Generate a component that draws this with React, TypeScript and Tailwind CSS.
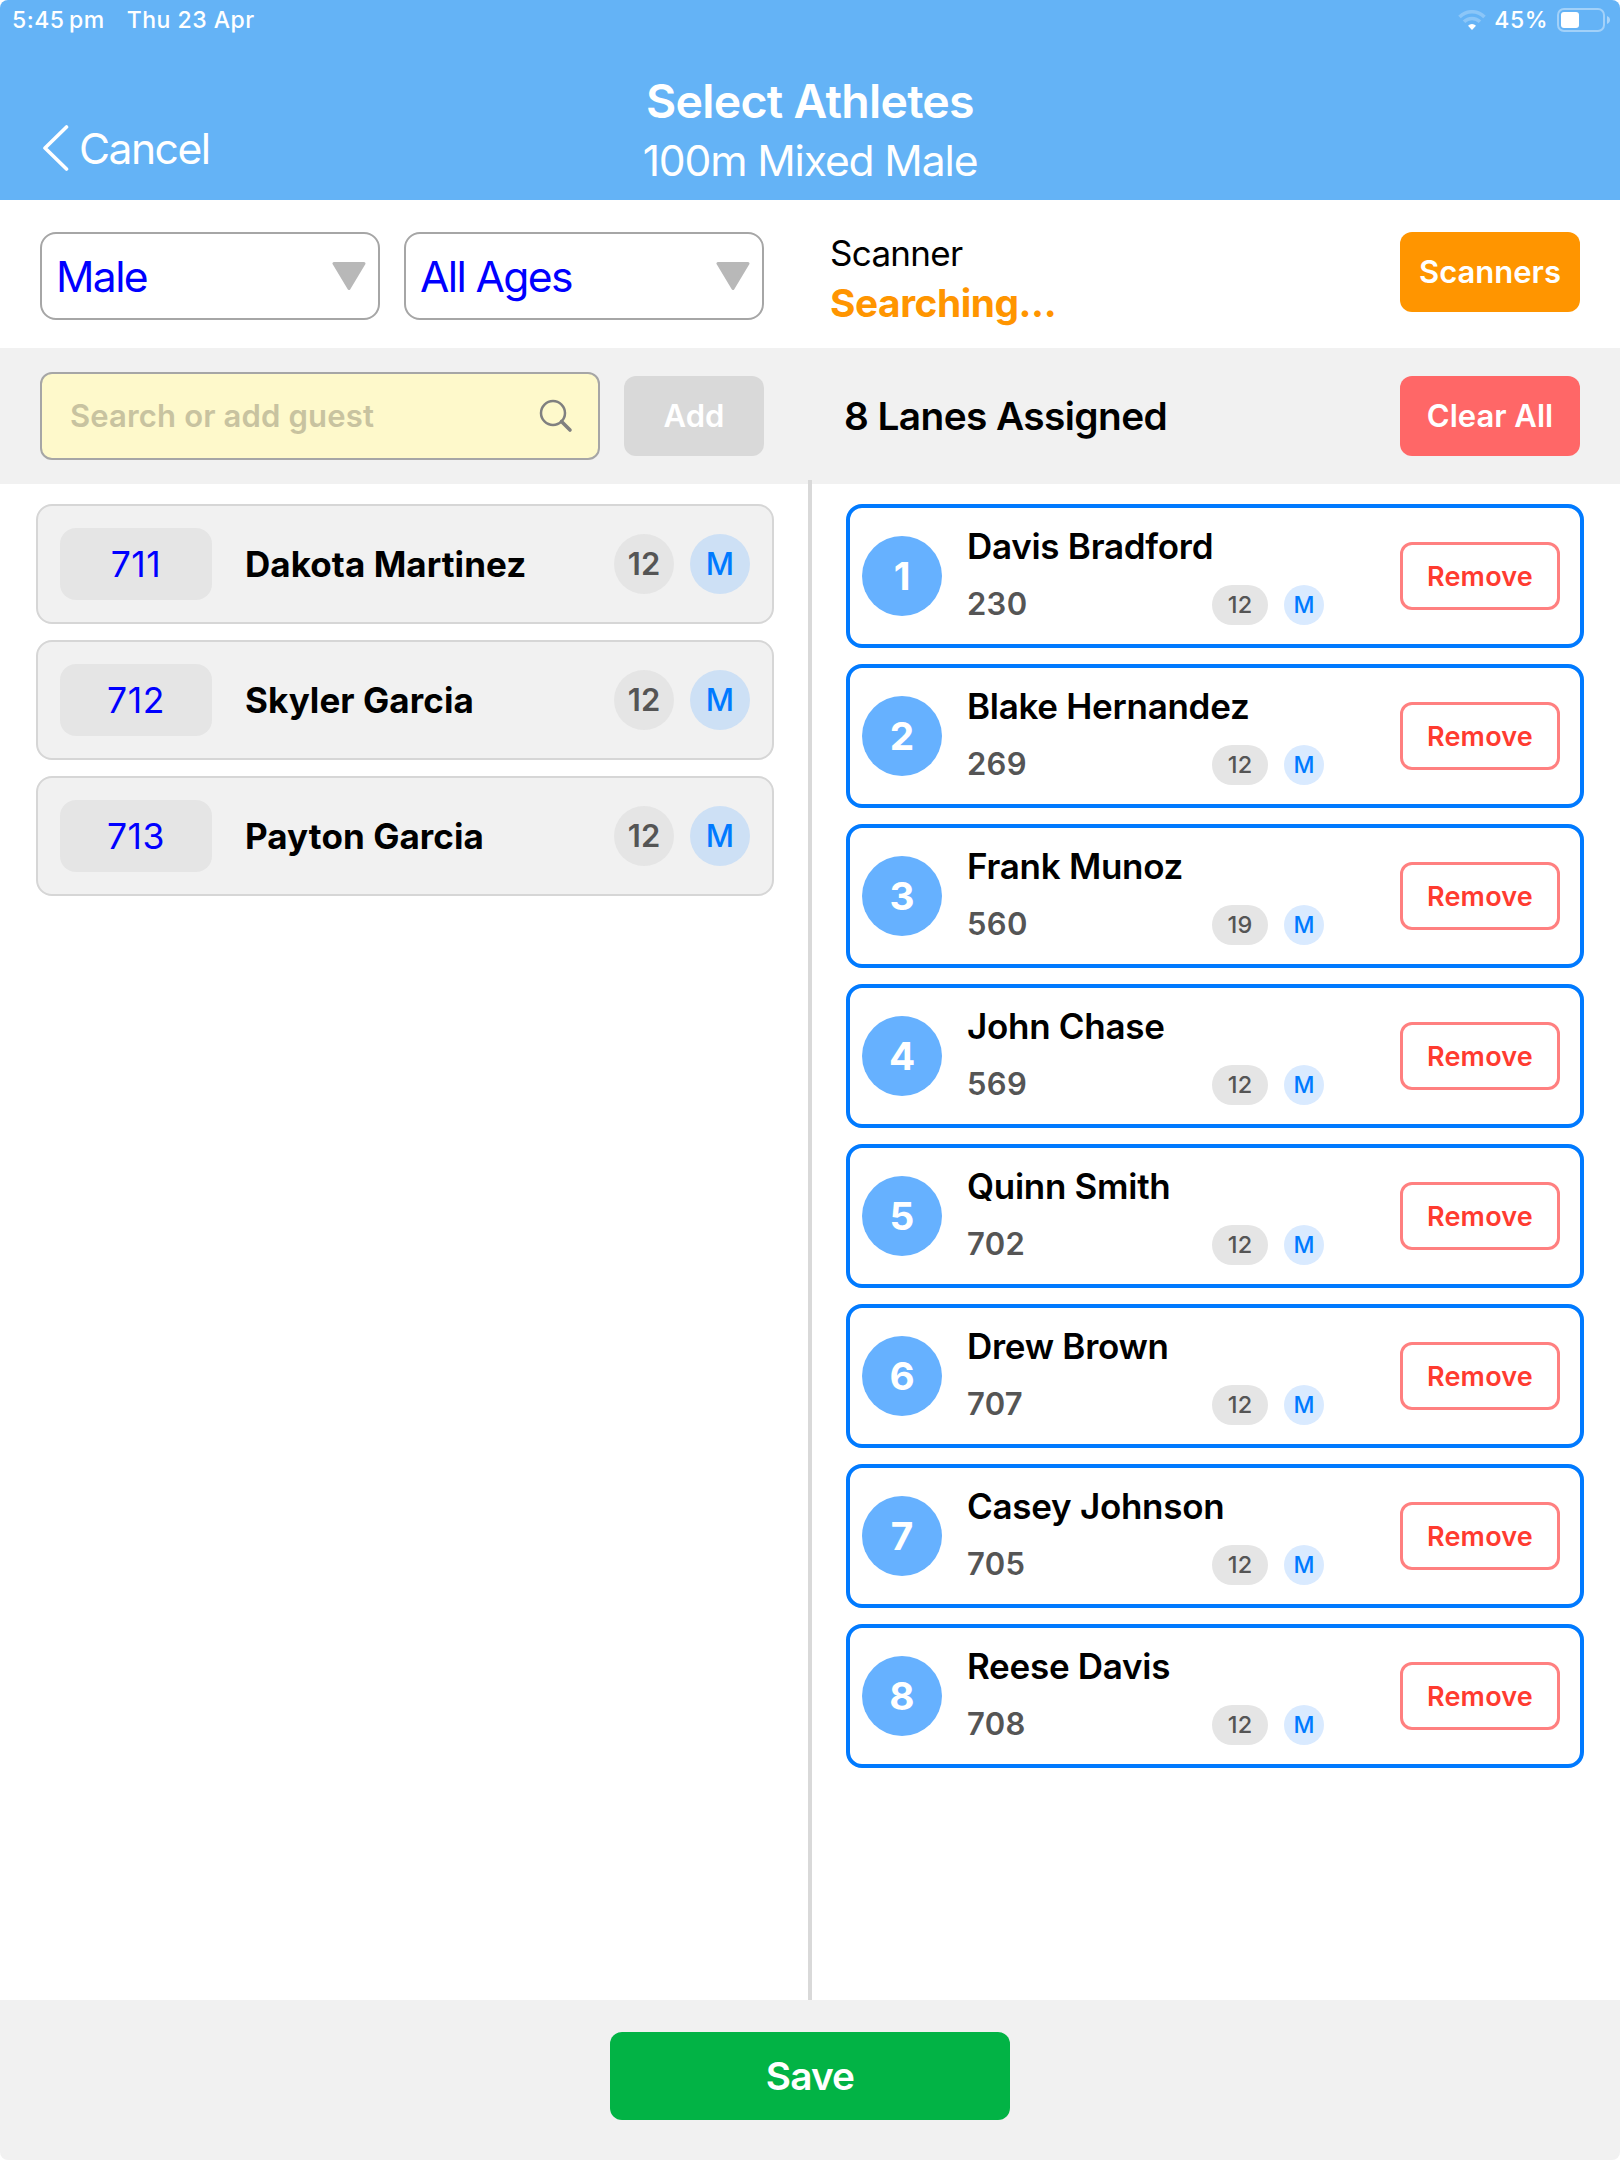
import { useState } from "react";

const athletes = [
  { bib: 711, name: "Dakota Martinez", age: 12, sex: "M" },
  { bib: 712, name: "Skyler Garcia", age: 12, sex: "M" },
  { bib: 713, name: "Payton Garcia", age: 12, sex: "M" },
];

const initialLanes = [
  { lane: 1, bib: 230, name: "Davis Bradford", age: 12, sex: "M" },
  { lane: 2, bib: 269, name: "Blake Hernandez", age: 12, sex: "M" },
  { lane: 3, bib: 560, name: "Frank Munoz", age: 19, sex: "M" },
  { lane: 4, bib: 569, name: "John Chase", age: 12, sex: "M" },
  { lane: 5, bib: 702, name: "Quinn Smith", age: 12, sex: "M" },
  { lane: 6, bib: 707, name: "Drew Brown", age: 12, sex: "M" },
  { lane: 7, bib: 705, name: "Casey Johnson", age: 12, sex: "M" },
  { lane: 8, bib: 708, name: "Reese Davis", age: 12, sex: "M" },
];

type Athlete = (typeof athletes)[number];
type Lane = (typeof initialLanes)[number];

function StatusBar() {
  return (
    <div className="flex h-10 items-center justify-between pl-3 pr-2.5 text-[23px] font-medium tracking-[0.022em]">
      <div className="flex gap-[22px]">
        <span>5:45&#8201;pm</span>
        <span>Thu 23 Apr</span>
      </div>
      <div className="flex items-center">
        <svg className="mr-2 h-5 w-7" viewBox="0 0 28 20" fill="none">
          <path d="M1.500 7a17.500 17.500 0 0 1 25 0" stroke="#fff" strokeOpacity="0.25" strokeWidth="3.600" />
          <path d="M6 11.800a11.200 11.200 0 0 1 16 0" stroke="#fff" strokeOpacity="0.25" strokeWidth="3.600" />
          <path d="M14 20l-4-4.200a5.600 5.600 0 0 1 8 0z" fill="#fff" />
        </svg>
        <span>45%</span>
        <svg className="ml-[9px] h-6 w-[53px]" viewBox="0 0 53 24" fill="none">
          <rect x="1" y="1" width="46" height="22" rx="6" stroke="#fff" strokeOpacity="0.4" strokeWidth="2" />
          <rect x="4" y="4" width="18" height="16" rx="3" fill="#fff" />
          <path d="M50 8c2 .8 3 2.200 3 4s-1 3.200-3 4z" fill="#fff" fillOpacity="0.45" />
        </svg>
      </div>
    </div>
  );
}

function Header() {
  return (
    <header className="h-[200px] rounded-t-lg bg-[#64b3f6] text-white">
      <StatusBar />
      <div className="grid h-40 grid-cols-3">
        <button type="button" className="mt-17 ml-[42px] flex h-20 items-center gap-[10px] text-[42.600px] tracking-[-0.036em]">
          <svg className="h-12 w-[27px]" viewBox="0 0 27 48" fill="none" stroke="#fff" strokeWidth="3.600" strokeLinecap="round" strokeLinejoin="round">
            <path d="M24.500 3L3 24l21.500 21" />
          </svg>
          <span className="pt-0.5">Cancel</span>
        </button>
        <div className="flex flex-col items-center pt-8">
          <h1 className="text-[46.500px] leading-[58px] font-semibold tracking-[-0.016em]">Select Athletes</h1>
          <p className="text-[42.600px] leading-[62px] tracking-[-0.027em]">100m Mixed Male</p>
        </div>
      </div>
    </header>
  );
}

function Select({ label, className }: { label: string; className: string }) {
  return (
    <button
      type="button"
      className={`flex h-[88px] items-center justify-between rounded-2xl border-2 border-[#a6a6a6] bg-white pr-3 pl-[14px] text-[42.600px] tracking-[-0.038em] text-[#0000ff] ${className}`}
    >
      <span className="pt-0.5">{label}</span>
      <svg className="h-7 w-[34px]" viewBox="0 0 34 28">
        <path d="M2 1.500h30L17 26.500z" fill="#b8b8b8" stroke="#b8b8b8" strokeWidth="3" strokeLinejoin="round" />
      </svg>
    </button>
  );
}

function AthleteRow({ athlete }: { athlete: Athlete }) {
  return (
    <li className="flex h-[120px] items-center rounded-2xl border-2 border-[#d6d6d6] bg-[#f1f1f1] px-[22px]">
      <span className="flex h-[72px] w-[152px] items-center justify-center rounded-2xl bg-[#e5e5e5] pt-0.5 text-[35.500px] tracking-[0.015em] text-[#0000ff]">
        {athlete.bib}
      </span>
      <span className="ml-[33px] flex-1 text-[35px] font-bold tracking-[0.002em]">{athlete.name}</span>
      <span className="flex size-[60px] items-center justify-center rounded-full bg-[#e5e5e5] text-[31px] font-semibold text-[#555]">
        {athlete.age}
      </span>
      <span className="ml-4 flex size-[60px] items-center justify-center rounded-full bg-[#cde0f5] text-[31px] font-medium text-[#007aff]">
        {athlete.sex}
      </span>
    </li>
  );
}

function LaneCard({ lane, onRemove }: { lane: Lane; onRemove: () => void }) {
  return (
    <li className="flex h-36 items-center rounded-2xl border-4 border-[#007aff] bg-white pr-5 pl-3">
      <span className="flex size-20 items-center justify-center rounded-full bg-[#66b1ff] text-[38.800px] font-bold text-white">
        {lane.lane}
      </span>
      <div className="ml-[25px] flex-1">
        <p className="text-[35px] leading-[56px] font-semibold tracking-[-0.008em]">{lane.name}</p>
        <div className="flex h-[60px] items-center pt-0.5">
          <span className="w-[245px] pb-0.5 text-[31px] font-semibold tracking-[0.01em] text-[#555]">{lane.bib}</span>
          <span className="flex h-10 w-14 items-center justify-center rounded-full bg-[#e5e5e5] text-[23.500px] font-medium tracking-[0.01em] text-[#555]">
            {lane.age}
          </span>
          <span className="ml-4 flex size-10 items-center justify-center rounded-full bg-[#d9eaff] text-[23px] font-medium text-[#007aff]">
            {lane.sex}
          </span>
        </div>
      </div>
      <button
        type="button"
        onClick={onRemove}
        className="h-[68px] w-40 rounded-xl border-3 border-[#ff8080] pt-0.5 text-[27px] font-semibold tracking-[0.008em] text-[#ff3b30]"
      >
        Remove
      </button>
    </li>
  );
}

export default function App() {
  const [lanes, setLanes] = useState(initialLanes);
  const [query, setQuery] = useState("");

  return (
    <div className="flex h-[2160px] w-[1620px] flex-col bg-white font-['Inter',sans-serif] text-black">
      <Header />

      <div className="flex h-[148px] items-start px-10 pt-8">
        <Select label="Male" className="w-[340px]" />
        <Select label="All Ages" className="ml-6 w-[360px]" />
        <div className="ml-[66px] flex-1">
          <p className="text-[35px] leading-[42px] tracking-[-0.02em]">Scanner</p>
          <p className="text-[38.800px] leading-[58px] font-bold tracking-[-0.011em] text-[#ff9500]">Searching...</p>
        </div>
        <button type="button" className="h-20 w-[180px] rounded-xl bg-[#ff9500] text-[31px] font-semibold text-white">
          Scanners
        </button>
      </div>

      <div className="flex h-[136px] items-center bg-[#f1f1f1] px-10">
        <div className="flex h-[88px] w-[560px] items-center rounded-xl border-2 border-[#a6a6a6] bg-[#fef9cb] pr-[25px] pl-7">
          <input
            value={query}
            onChange={(e) => setQuery(e.target.value)}
            placeholder="Search or add guest"
            className="h-full min-w-0 flex-1 pb-0.5 text-[31px] font-semibold tracking-[0.005em] outline-none placeholder:text-[#c8c3a0]"
          />
          <svg className="size-[34px]" viewBox="0 0 34 34" fill="none" stroke="#808080">
            <circle cx="14" cy="14" r="12" strokeWidth="2.500" />
            <path d="M22.500 22.500l8.500 8.500" strokeWidth="3.600" strokeLinecap="round" />
          </svg>
        </div>
        <button type="button" className="ml-6 h-20 w-[140px] rounded-xl bg-[#d9d9d9] text-[31px] font-semibold text-white">
          Add
        </button>
        <h2 className="ml-20 flex-1 text-[38.800px] font-semibold tracking-[-0.015em]">{lanes.length} Lanes Assigned</h2>
        <button
          type="button"
          onClick={() => setLanes([])}
          className="h-20 w-[180px] rounded-xl bg-[#ff6767] text-[31px] font-semibold text-white"
        >
          Clear All
        </button>
      </div>

      <main className="flex flex-1">
        <ul className="flex w-[808px] flex-col gap-4 pt-5 pr-[34px] pl-9">
          {athletes.map((athlete) => (
            <AthleteRow key={athlete.bib} athlete={athlete} />
          ))}
        </ul>
        <div className="-mt-1 w-1 bg-[#d9d9d9]" />
        <ul className="flex flex-1 flex-col gap-4 pt-5 pr-9 pl-[34px]">
          {lanes.map((lane) => (
            <LaneCard
              key={lane.lane}
              lane={lane}
              onRemove={() => setLanes(lanes.filter((l) => l.lane !== lane.lane))}
            />
          ))}
        </ul>
      </main>

      <footer className="flex h-40 items-start justify-center rounded-b-lg bg-[#f1f1f1] pt-8">
        <button type="button" className="h-[88px] w-[400px] rounded-xl bg-[#02b345] text-[38.800px] font-semibold tracking-[-0.022em] text-white">
          Save
        </button>
      </footer>
    </div>
  );
}
